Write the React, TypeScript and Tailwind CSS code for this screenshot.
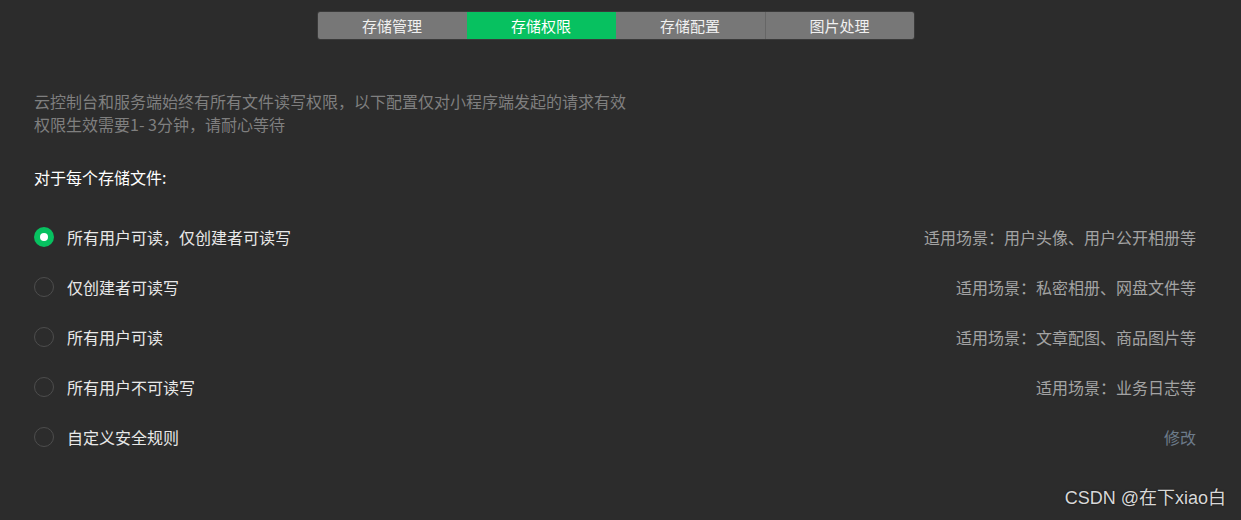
import React, { useState } from 'react';

const tabs = ['存储管理', '存储权限', '存储配置', '图片处理'];

const rules = [
    { label: '所有用户可读，仅创建者可读写', scene: '适用场景：用户头像、用户公开相册等' },
    { label: '仅创建者可读写', scene: '适用场景：私密相册、网盘文件等' },
    { label: '所有用户可读', scene: '适用场景：文章配图、商品图片等' },
    { label: '所有用户不可读写', scene: '适用场景：业务日志等' },
    { label: '自定义安全规则', scene: '修改', link: true },
];

const Radio: React.FC<{ checked: boolean }> = ({ checked }) => (
    <div
        className={`w-[20px] h-[20px] rounded-full flex items-center justify-center shrink-0 ${
            checked ? 'bg-[#07c160]' : 'border border-[#4d4d4d]'
        }`}
    >
        {checked && <div className="w-[8px] h-[8px] rounded-full bg-white" />}
    </div>
);

export default function App() {
    const [active, setActive] = useState(1);
    const [selected, setSelected] = useState(0);

    return (
        <div
            className="relative w-[1241px] h-[520px] bg-[#2c2c2c] overflow-hidden"
            style={{ fontFamily: '"Microsoft YaHei", "Noto Sans CJK SC", "Noto Sans", sans-serif' }}
        >
            {/* Tabs */}
            <div className="flex justify-center pt-[11px] pr-[10px]">
                <div className="flex h-[29px] rounded-[3px] overflow-hidden border border-[#3a3a3a]">
                    {tabs.map((t, i) => (
                        <button
                            key={t}
                            onClick={() => setActive(i)}
                            className={`w-[149px] h-full text-[15px] leading-none flex items-center justify-center ${
                                i === active ? 'bg-[#07c160] text-white' : 'bg-[#777777] text-[#f0f0f0]'
                            } ${i > 0 && i !== active && i - 1 !== active ? 'border-l border-[#666666]' : ''}`}
                        >
                            {t}
                        </button>
                    ))}
                </div>
            </div>

            <div className="pl-[34px] pr-[45px]">
                {/* Description */}
                <div className="mt-[50px] text-[16px] leading-[23px] text-[#7f7f7f]">
                    <p>云控制台和服务端始终有所有文件读写权限，以下配置仅对小程序端发起的请求有效</p>
                    <p>权限生效需要1- 3分钟，请耐心等待</p>
                </div>

                {/* Header */}
                <div className="mt-[30px] text-[16px] leading-[23px] text-white">对于每个存储文件:</div>

                {/* Options */}
                <div className="mt-[23px] flex flex-col">
                    {rules.map((r, i) => (
                        <div
                            key={r.label}
                            onClick={() => setSelected(i)}
                            className="h-[50px] flex items-center justify-between cursor-pointer"
                        >
                            <div className="flex items-center gap-[13px]">
                                <Radio checked={selected === i} />
                                <span className="text-[16px] text-[#e8e8e8]">{r.label}</span>
                            </div>
                            <span className={`text-[16px] ${r.link ? 'text-[#6d7b8a]' : 'text-[#a3a3a3]'}`}>
                                {r.scene}
                            </span>
                        </div>
                    ))}
                </div>
            </div>

            {/* Watermark */}
            <div
                className="absolute right-[15px] bottom-[8px] text-[18px] text-[#d8d8d8] [text-shadow:0_0_2px_rgba(0,0,0,0.6)]"
                style={{ fontFamily: '"Liberation Sans", "Noto Sans CJK SC", sans-serif' }}
            >
                CSDN @在下xiao白
            </div>
        </div>
    );
}
